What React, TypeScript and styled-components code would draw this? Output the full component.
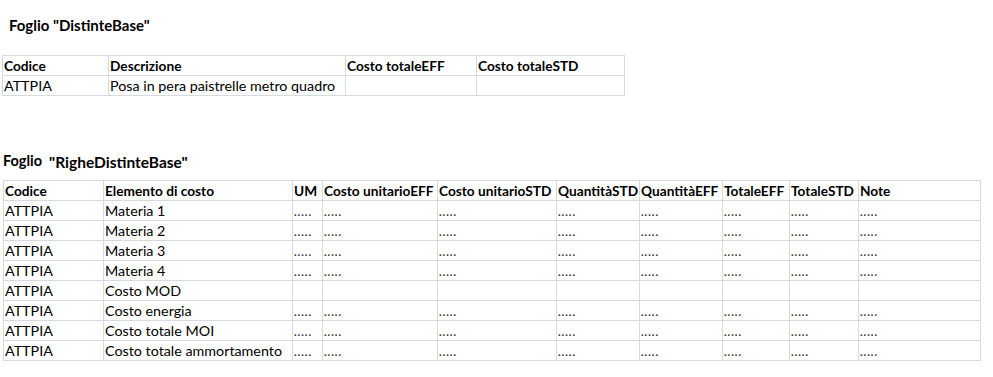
import React from 'react';
import styled, {createGlobalStyle} from "styled-components";

const GlobalStyle = createGlobalStyle`
  html, body {
    margin: 0;
    padding: 0;
    background: #ffffff;
  }
  body {
    font-family: Lato, "Open Sans", "Liberation Sans", sans-serif;
    color: #000;
  }
`

const headTop = ['Codice', 'Descrizione', 'Costo totaleEFF', 'Costo totaleSTD']
const widthsTop = [106, 237, 131, 148]

const headRows = ['Codice', 'Elemento di costo', 'UM', 'Costo unitarioEFF', 'Costo unitarioSTD', 'QuantitàSTD', 'QuantitàEFF', 'TotaleEFF', 'TotaleSTD', 'Note']
const widthsRows = [100, 189, 30, 115, 119, 83, 83, 67, 69, 122]

const elementi = [
  {name: 'Materia 1', filled: true},
  {name: 'Materia 2', filled: true},
  {name: 'Materia 3', filled: true},
  {name: 'Materia 4', filled: true},
  {name: 'Costo MOD', filled: false},
  {name: 'Costo energia', filled: true},
  {name: 'Costo totale MOI', filled: true},
  {name: 'Costo totale ammortamento', filled: true},
]

const sum = (list: number[]) => list.reduce((a, b) => a + b, 0)

export default function App() {
  return (
    <Sheet>
      <GlobalStyle/>
      <TitleArea>
        <Title>Foglio "DistinteBase"</Title>
      </TitleArea>
      <Grid $left={2} $width={sum(widthsTop)} $accent>
        <colgroup>
          {widthsTop.map((w, i) => <col key={i} style={{width: w}}/>)}
        </colgroup>
        <thead>
          <tr>
            {headTop.map(h => <HeadCell key={h}>{h}</HeadCell>)}
          </tr>
        </thead>
        <tbody>
          <tr>
            <Cell>ATTPIA</Cell>
            <Cell>Posa in pera paistrelle metro quadro</Cell>
            <Cell/>
            <Cell/>
          </tr>
        </tbody>
      </Grid>

      <SecondTitleArea>
        <SmallTitle>Foglio</SmallTitle>
        <QuotedTitle>"RigheDistinteBase"</QuotedTitle>
      </SecondTitleArea>
      <Grid $left={3} $width={sum(widthsRows)}>
        <colgroup>
          {widthsRows.map((w, i) => <col key={i} style={{width: w}}/>)}
        </colgroup>
        <thead>
          <tr>
            {headRows.map(h => <HeadCell key={h}>{h}</HeadCell>)}
          </tr>
        </thead>
        <tbody>
          {elementi.map(el => (
            <tr key={el.name}>
              <Cell>ATTPIA</Cell>
              <Cell>{el.name}</Cell>
              {headRows.slice(2).map(h => <Cell key={h}>{el.filled ? <Dots>.....</Dots> : null}</Cell>)}
            </tr>
          ))}
        </tbody>
      </Grid>
    </Sheet>
  );
}

const Sheet = styled.div`
  width: 993px;
  height: 377px;
  overflow: hidden;
`
const TitleArea = styled.div`
  height: 55px;
  box-sizing: border-box;
  padding: 16px 0 0 9px;
`
const Title = styled.div`
  font-size: 15px;
  font-weight: 700;
  line-height: 18px;
`
const SmallTitle = styled.span`
  font-size: 14.5px;
  font-weight: 700;
`
const QuotedTitle = styled.span`
  font-size: 15.5px;
  font-weight: 700;
  position: relative;
  top: 2px;
`
const SecondTitleArea = styled.div`
  height: 84px;
  box-sizing: border-box;
  padding: 57px 0 0 3px;
  display: flex;
  align-items: baseline;
  gap: 7px;
  line-height: 1;
`
const Grid = styled.table<{ $left: number; $width: number; $accent?: boolean }>`
  margin-left: ${p => p.$left}px;
  width: ${p => p.$width}px;
  border-collapse: collapse;
  table-layout: fixed;
  font-size: 14.3px;
  border-top: 1px solid ${p => p.$accent ? '#a9b5c6' : '#d5d9e0'};
`
const HeadCell = styled.th`
  height: 20px;
  padding: 0 0 0 1px;
  box-sizing: border-box;
  text-align: left;
  font-size: 13.7px;
  font-weight: 700;
  white-space: nowrap;
  overflow: hidden;
  border: 1px solid #d5d9e0;
  vertical-align: middle;
`
const Cell = styled.td`
  height: 20px;
  padding: 0 0 0 1px;
  box-sizing: border-box;
  white-space: nowrap;
  overflow: hidden;
  border: 1px solid #d5d9e0;
  vertical-align: middle;
`
const Dots = styled.span`
  font-size: 11px;
  letter-spacing: 1px;
  font-weight: 700;
  color: #333;
`
